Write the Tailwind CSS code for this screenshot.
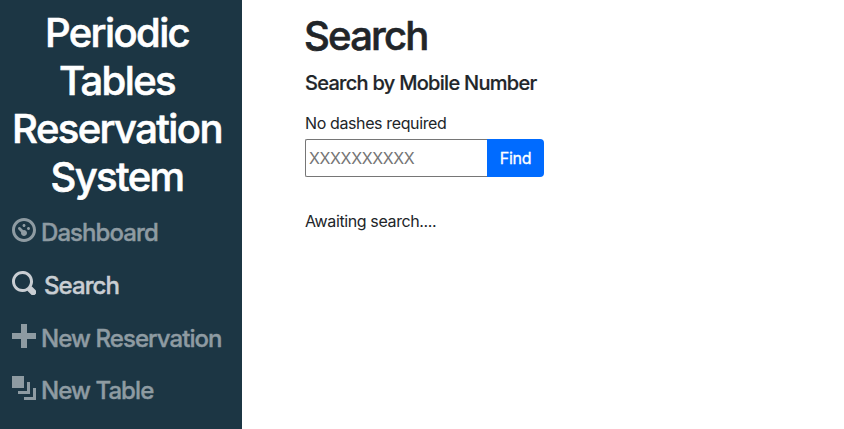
<!DOCTYPE html>
<html lang="en">
<head>
<meta charset="utf-8">
<title>Periodic Tables Reservation System</title>
<script src="https://cdn.jsdelivr.net/npm/@tailwindcss/browser@4"></script>
</head>
<body class="flex h-[429px] overflow-hidden bg-white font-['Inter','Liberation_Sans',sans-serif] text-[#212529]">
<aside class="flex w-[242px] shrink-0 flex-col bg-[#1c3644] pt-[9px]">
  <h1 class="pr-2 text-center text-[40px] leading-[48px] font-medium tracking-[-1.6px] text-white [-webkit-text-stroke:0.6px]">Periodic<br>Tables<br>Reservation<br>System</h1>
  <nav class="mt-[7px] pl-3 text-2xl leading-[36px] font-medium tracking-[-0.93px] whitespace-nowrap text-[#8e9ba2]">
    <a class="flex h-[53px] items-start gap-[5px]"><svg class="mt-[10px] size-6 shrink-0" viewBox="0 0 8 8" fill="currentColor"><path d="M4 0c-2.200 0-4 1.800-4 4s1.800 4 4 4 4-1.800 4-4-1.800-4-4-4zm0 1c1.660 0 3 1.340 3 3s-1.340 3-3 3-3-1.340-3-3 1.340-3 3-3zm0 1c-.28 0-.5.22-.5.5s.22.5.5.5.5-.22.5-.5-.22-.5-.5-.5zm-1.660 1a.5.5 0 0 0-.19.84l.91.91c-.02.08-.06.16-.06.25 0 .55.45 1 1 1s1-.45 1-1-.45-1-1-1c-.09 0-.17.04-.25.06l-.91-.91a.5.5 0 0 0-.5-.15zm3.160 0c-.28 0-.5.22-.5.5s.22.5.5.5.5-.22.5-.5-.22-.5-.5-.5z"/></svg><span class="mt-[7px] [-webkit-text-stroke:0.4px]">Dashboard</span></a>
    <a class="flex h-[53px] items-start gap-2 text-[#c9ced3]"><svg class="mt-[10px] size-6 shrink-0" viewBox="0 0 8 8" fill="currentColor"><path d="M3.500 0c-1.930 0-3.500 1.570-3.500 3.500s1.570 3.500 3.500 3.500c.59 0 1.170-.14 1.660-.41a1 1 0 0 0 .13.13l1 1a1.020 1.020 0 1 0 1.440-1.440l-1-1a1 1 0 0 0-.16-.13c.27-.49.44-1.060.44-1.660 0-1.930-1.550-3.500-3.500-3.500zm0 1c1.390 0 2.500 1.100 2.500 2.500 0 .66-.24 1.270-.66 1.720l-.03.03a1 1 0 0 0-.13.13c-.44.4-1.040.63-1.690.63-1.400 0-2.500-1.110-2.500-2.500s1.100-2.500 2.500-2.500z"/></svg><span class="mt-[7px] [-webkit-text-stroke:0.4px]">Search</span></a>
    <a class="flex h-[52px] items-start gap-[5px]"><svg class="mt-[10px] size-6 shrink-0" viewBox="0 0 8 8" fill="currentColor"><path d="M3 0v3h-3v2h3v3h2v-3h3v-2h-3v-3h-2z"/></svg><span class="mt-[7px] [-webkit-text-stroke:0.4px]">New Reservation</span></a>
    <a class="flex h-[53px] items-start gap-[5px]"><svg class="mt-[10px] size-6 shrink-0" viewBox="0 0 8 8" fill="currentColor"><path d="M0 0v4h4v-4h-4zm5 2v3h-3v1h4v-4h-1zm2 2v3h-3v1h4v-4h-1z"/></svg><span class="mt-[7px] [-webkit-text-stroke:0.4px]">New Table</span></a>
  </nav>
</aside>
<main class="pt-3 pl-[63px] whitespace-nowrap">
  <h1 class="-ml-px text-[40px] leading-[48px] font-medium tracking-[-1.8px] [-webkit-text-stroke:0.6px]">Search</h1>
  <h2 class="mt-[11px] text-xl leading-6 font-medium tracking-[-0.71px] [-webkit-text-stroke:0.2px]">Search by Mobile Number</h2>
  <label for="mobile" class="mt-4 block text-base leading-6 tracking-[-0.38px]">No dashes required</label>
  <div class="mt-1 flex h-[38px]">
    <input id="mobile" placeholder="XXXXXXXXXX" class="w-[182px] rounded-l-[2px] border border-r-0 border-[#767676] px-[3px] text-base tracking-[-0.38px] outline-none placeholder:text-[#757575]">
    <button class="w-[57px] rounded-r-[4px] bg-[#006bff] text-base tracking-[-0.3px] text-white [-webkit-text-stroke:0.3px]">Find</button>
  </div>
  <p class="mt-8 text-base leading-6 tracking-[-0.38px]">Awaiting search....</p>
</main>
</body>
</html>
